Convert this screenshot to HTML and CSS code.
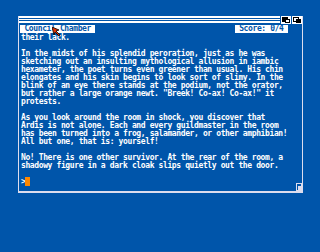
FILE: index.html
```html
<!DOCTYPE html>
<html lang="en">
<head>
    <title>Council Chamber</title>
    <meta charset="utf-8"/>
    <link rel="stylesheet" href="styles.css">
</head>
<body>

<div class="window">
    <div class="titlebar">
        <div class="stripes"></div>
        <svg class="gadget" width="10" height="8" viewBox="0 0 10 8">
            <rect x="0" y="0" width="10" height="8" fill="#fff"/>
            <rect x="1" y="1" width="6" height="5" fill="#000"/>
            <rect x="4" y="3" width="5" height="4" fill="#000"/>
            <rect x="5" y="4" width="3" height="2" fill="#fff"/>
        </svg>
        <svg class="gadget" width="10" height="8" viewBox="0 0 10 8">
            <rect x="0" y="0" width="10" height="8" fill="#fff"/>
            <rect x="1" y="1" width="6" height="5" fill="#000"/>
            <rect x="2" y="2" width="4" height="3" fill="#fff"/>
            <rect x="4" y="3" width="5" height="4" fill="#000"/>
        </svg>
    </div>

    <div class="status">
        <span class="label"> Council Chamber </span>
        <span class="label"> Score: 0/4 </span>
    </div>

    <div class="story">their lack.

In the midst of his splendid peroration, just as he was
sketching out an insulting mythological allusion in iambic
hexameter, the poet turns even greener than usual. His chin
elongates and his skin begins to look sort of slimy. In the
blink of an eye there stands at the podium, not the orator,
but rather a large orange newt. "Breek! Co-ax! Co-ax!" it
protests.

As you look around the room in shock, you discover that
Ardis is not alone. Each and every guildmaster in the room
has been turned into a frog, salamander, or other amphibian!
All but one, that is: yourself!

No! There is one other survivor. At the rear of the room, a
shadowy figure in a dark cloak slips quietly out the door.

<span class="prompt">&gt;</span><span class="cursor"> </span></div>

    <!-- size gadget -->
    <svg class="sizer" width="6" height="8" viewBox="0 0 6 8">
        <rect x="0" y="0" width="6" height="8" fill="#dde"/>
        <rect x="1" y="1" width="4" height="6" fill="#0055aa"/>
        <rect x="2" y="3" width="3" height="4" fill="#dde"/>
    </svg>
</div>

<!-- mouse pointer -->
<svg class="pointer" width="10" height="10" viewBox="0 0 10 10">
    <polygon points="0,0 7,3 4,4 8,8 7,9 3,5 2,8" fill="#e03000" stroke="#000" stroke-width="0.8"/>
</svg>

</body>
</html>
```

FILE: styles.css
```css
body {
    margin: 0;
    padding: 16px 0 0 18px;
    width: 320px;
    height: 252px;
    box-sizing: border-box;
    overflow: hidden;
    background: #0055aa;
    font-family: "DejaVu Sans Mono", "Liberation Mono", monospace;
    color: #fff;
}

.window {
    position: relative;
    width: 285px;
    height: 177px;
    box-sizing: border-box;
    border-left: 1px solid #dde;
    border-right: 1px solid #dde;
    border-bottom: 2px solid #dde;
}

.titlebar {
    display: flex;
    height: 8px;
}

.stripes {
    flex: 1;
    height: 7px;
    background: linear-gradient(#fff 0 2px, #0055aa 2px 3px, #fff 3px 4px, #0055aa 4px 5px, #fff 5px 7px);
}

.gadget {
    display: block;
    margin-left: 1px;
}

.status {
    display: flex;
    justify-content: space-between;
    width: 268px;
    margin: 1px 0 0 1px;
    height: 8px;
}

.label {
    background: #fff;
    color: #0055aa;
    white-space: pre;
    font-size: 8px;
    font-weight: bold;
    line-height: 8px;
    letter-spacing: -0.38px;
}

.story {
    margin: 1px 0 0 2px;
    white-space: pre;
    font-size: 8px;
    font-weight: bold;
    line-height: 8px;
    letter-spacing: -0.38px;
}

.prompt {
    color: #fff;
}

.cursor {
    background: #ff8800;
}

.sizer {
    position: absolute;
    right: 0;
    bottom: 0;
    display: block;
}

.pointer {
    position: absolute;
    left: 52px;
    top: 27px;
}
```
